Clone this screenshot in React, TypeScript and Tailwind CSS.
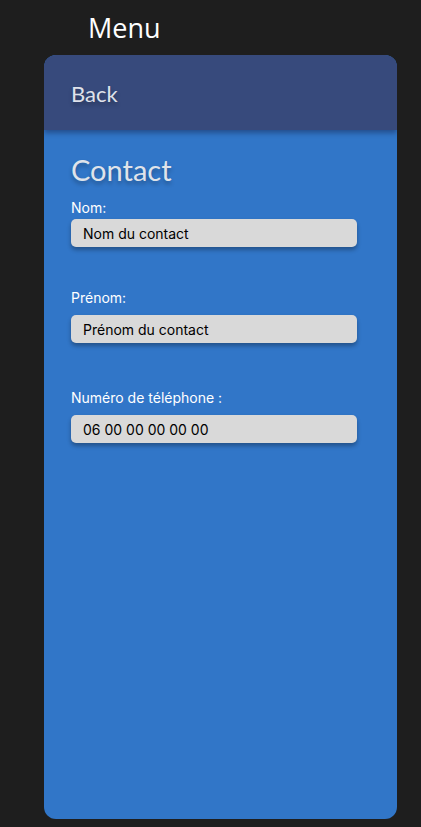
export default function App() {
  return (
    <div className="min-h-[827px] w-[421px] bg-[#1e1e1e] pt-[10px] pb-[8px]">
      <h1 className="ml-[88px] h-[45px] text-[27px] leading-[36px] text-white [font-family:'Open_Sans',sans-serif]">
        Menu
      </h1>
      <div className="ml-[44px] w-[353px] h-[764px] rounded-[12px] bg-[#3176c8] overflow-hidden flex flex-col">
        <div className="h-[75px] bg-[#374a7c] shadow-[0_3px_5px_rgba(20,30,70,0.45)] relative z-10 flex items-center px-[27px]">
          <span className="mt-[2px] text-[22px] text-[#dfe2ea] [font-family:'Lato',sans-serif] [text-shadow:0_3px_4px_rgba(0,0,0,0.3)]">
            Back
          </span>
        </div>
        <div className="px-[27px] pt-[22px] [font-family:'Inter',sans-serif]">
          <h2 className="text-[29px] leading-[36px] text-[#dfe3ea] [font-family:'Lato',sans-serif] [text-shadow:0_3px_4px_rgba(0,0,0,0.3)]">
            Contact
          </h2>
          <div className="mt-[11px] text-[14px] leading-[17px] text-white">Nom:</div>
          <div className="mt-[3px] w-[286px] h-[28px] rounded-[5px] bg-[#d9d9d9] shadow-[0_3px_4px_rgba(0,0,0,0.3)] flex items-center pl-[12px] text-[14px] text-black">
            Nom du contact
          </div>
          <div className="mt-[42px] text-[14px] leading-[17px] text-white">Prénom:</div>
          <div className="mt-[9px] w-[286px] h-[28px] rounded-[5px] bg-[#d9d9d9] shadow-[0_3px_4px_rgba(0,0,0,0.3)] flex items-center pl-[12px] text-[14px] text-black">
            Prénom du contact
          </div>
          <div className="mt-[46px] text-[14px] leading-[17px] text-white">Numéro de téléphone :</div>
          <div className="mt-[9px] w-[286px] h-[28px] rounded-[5px] bg-[#d9d9d9] shadow-[0_3px_4px_rgba(0,0,0,0.3)] flex items-center pl-[12px] text-[14px] text-black">
            06 00 00 00 00 00
          </div>
        </div>
      </div>
    </div>
  );
}
